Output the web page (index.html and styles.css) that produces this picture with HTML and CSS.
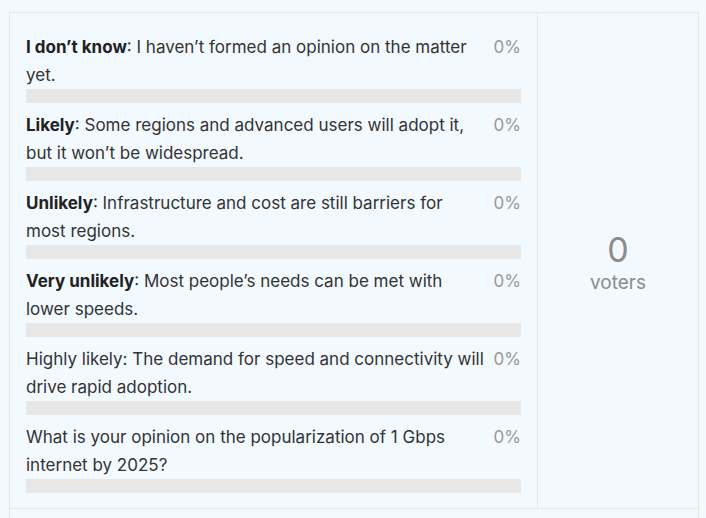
FILE: index.html
```html
<!DOCTYPE html>
<html>
<head>
<meta charset="utf-8">
<link rel="stylesheet" href="styles.css">
</head>
<body>
<div class="poll">
  <div class="main">
    <div class="options">
      <div class="option">
        <div class="row"><div class="label"><b>I don’t know</b>: I haven’t formed an opinion on the matter yet.</div><div class="pct">0%</div></div>
        <div class="bar"></div>
      </div>
      <div class="option">
        <div class="row"><div class="label"><b>Likely</b>: Some regions and advanced users will adopt it, but it won’t be widespread.</div><div class="pct">0%</div></div>
        <div class="bar"></div>
      </div>
      <div class="option">
        <div class="row"><div class="label"><b>Unlikely</b>: Infrastructure and cost are still barriers for most regions.</div><div class="pct">0%</div></div>
        <div class="bar"></div>
      </div>
      <div class="option">
        <div class="row"><div class="label"><b>Very unlikely</b>: Most people’s needs can be met with lower speeds.</div><div class="pct">0%</div></div>
        <div class="bar"></div>
      </div>
      <div class="option">
        <div class="row"><div class="label">Highly likely: The demand for speed and connectivity will drive rapid adoption.</div><div class="pct">0%</div></div>
        <div class="bar"></div>
      </div>
      <div class="option">
        <div class="row"><div class="label">What is your opinion on the popularization of 1 Gbps internet by 2025?</div><div class="pct">0%</div></div>
        <div class="bar"></div>
      </div>
    </div>
    <div class="summary">
      <div class="count">0</div>
      <div class="voters">voters</div>
    </div>
  </div>
  <div class="footer"></div>
</div>
</body>
</html>
```
FILE: styles.css
```css
html, body {
  margin: 0;
  background: #f2f9ff;
}
body {
  padding: 12px 7px 0 9px;
  font-family: Inter, "Liberation Sans", sans-serif;
  color: #333;
}
.poll {
  border: 1px solid #e4e7ea;
  border-bottom: none;
  background: #f2f9ff;
}
.main {
  display: flex;
}
.options {
  width: 528px;
  box-sizing: border-box;
  padding: 20px 16px 15px 16px;
  border-right: 1px solid #e4e7ea;
}
.option {
  margin-bottom: 8px;
}
.option:last-child {
  margin-bottom: 0;
}
.row {
  display: flex;
  align-items: flex-start;
  font-size: 17px;
  line-height: 28px;
}
.label {
  flex: 1;
}
.label b {
  font-weight: 700;
  color: #222;
}
.pct {
  color: #999;
  margin-left: 8px;
}
.bar {
  height: 14px;
  background: #e7e7e7;
}
.summary {
  flex: 1;
  display: flex;
  flex-direction: column;
  align-items: center;
  justify-content: center;
  color: #8c8c8c;
  padding-top: 6px;
}
.count {
  font-size: 34px;
  line-height: 38px;
}
.voters {
  font-size: 19px;
  line-height: 28px;
}
.footer {
  border-top: 1px solid #e4e7ea;
  height: 20px;
}
```
